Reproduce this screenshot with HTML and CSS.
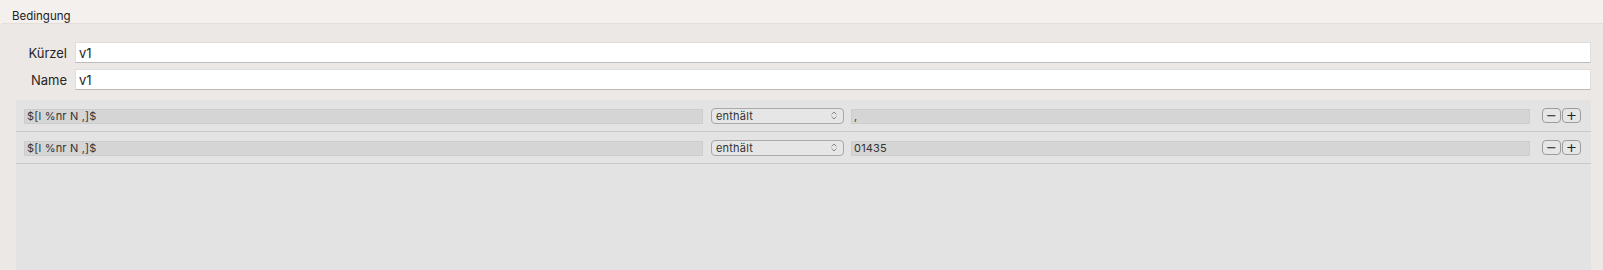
FILE: index.html
```html
<!DOCTYPE html>
<html lang="de">
<head>
  <meta charset="UTF-8">
  <title>Bedingung</title>
  <link rel="stylesheet" href="styles.css">
</head>
<body>
  <div class="titlebar">Bedingung</div>

  <div class="panel">
    <div class="form">
      <label class="form-label">Kürzel</label>
      <input class="form-input" type="text" value="v1">
      <label class="form-label">Name</label>
      <input class="form-input" type="text" value="v1">
    </div>

    <div class="rules">
      <div class="rule">
        <div class="field">$[l %nr N ,]$</div>
        <div class="popup">enthält
          <svg class="arrows" width="6" height="9" viewBox="0 0 6 9"><path d="M0.5 3.5 L3 1 L5.5 3.5 M0.5 5.5 L3 8 L5.5 5.5" fill="none" stroke="#8a8a8a" stroke-width="1"/></svg>
        </div>
        <div class="field">,</div>
        <div class="stepper">
          <button class="step">&minus;</button>
          <button class="step">+</button>
        </div>
      </div>
      <div class="rule">
        <div class="field">$[l %nr N ,]$</div>
        <div class="popup">enthält
          <svg class="arrows" width="6" height="9" viewBox="0 0 6 9"><path d="M0.5 3.5 L3 1 L5.5 3.5 M0.5 5.5 L3 8 L5.5 5.5" fill="none" stroke="#8a8a8a" stroke-width="1"/></svg>
        </div>
        <div class="field">01435</div>
        <div class="stepper">
          <button class="step">&minus;</button>
          <button class="step">+</button>
        </div>
      </div>
    </div>
  </div>
</body>
</html>
```

FILE: styles.css
```css
html, body {
  height: 100%;
}

body {
  margin: 0;
  background-color: #f3f0ed;
  font-family: Inter, "Noto Sans", sans-serif;
  color: #222;
  display: flex;
  flex-direction: column;
  overflow: hidden;
}

.titlebar {
  height: 23px;
  padding-left: 12px;
  font-size: 11.5px;
  line-height: 32px;
  box-sizing: border-box;
}

.panel {
  flex: 1;
  background-color: #ece8e5;
  border-top: 1px solid #e2dedb;
  border-top-left-radius: 4px;
  padding: 18px 12px 0 16px;
  display: flex;
  flex-direction: column;
}

.form {
  display: grid;
  grid-template-columns: 51px 1fr;
  column-gap: 8px;
  row-gap: 6px;
  align-items: center;
  margin-bottom: 10px;
}

.form-label {
  text-align: right;
  font-size: 13px;
  color: #262626;
}

.form-input {
  height: 21px;
  box-sizing: border-box;
  border: 1px solid #e0dedc;
  border-bottom-color: #bdbbb9;
  background: #fff;
  padding: 0 3px;
  font-family: inherit;
  font-size: 13px;
  color: #1e1e1e;
  outline: none;
}

.rules {
  flex: 1;
  background-color: #e3e3e3;
}

.rule {
  display: flex;
  align-items: center;
  height: 32px;
  border-bottom: 1px solid #c8c8c8;
  padding: 0 10px 0 8px;
  box-sizing: border-box;
  gap: 8px;
}

.field {
  flex: 1;
  height: 15px;
  background-color: #d5d5d5;
  border: 1px solid #cdcdcd;
  box-sizing: border-box;
  font-size: 11px;
  line-height: 13px;
  letter-spacing: 0.2px;
  padding-left: 2px;
  color: #333;
  margin-top: 2px;
}

.popup {
  width: 133px;
  height: 16px;
  box-sizing: border-box;
  border: 1px solid #a9a9a9;
  border-radius: 4px;
  background: #e6e6e6;
  font-size: 11px;
  line-height: 14px;
  letter-spacing: 0.2px;
  padding-left: 4px;
  position: relative;
  color: #333;
  margin-right: -1px;
}

.arrows {
  position: absolute;
  right: 6px;
  top: 2px;
}

.stepper {
  display: flex;
  gap: 1px;
  margin-left: 4px;
}

.step {
  width: 19px;
  height: 15px;
  box-sizing: border-box;
  border: 1px solid #9c9c9c;
  border-radius: 4px;
  background: #e6e6e6;
  padding: 0;
  font-family: "DejaVu Sans", sans-serif;
  font-size: 13px;
  line-height: 11px;
  color: #222;
}
```
